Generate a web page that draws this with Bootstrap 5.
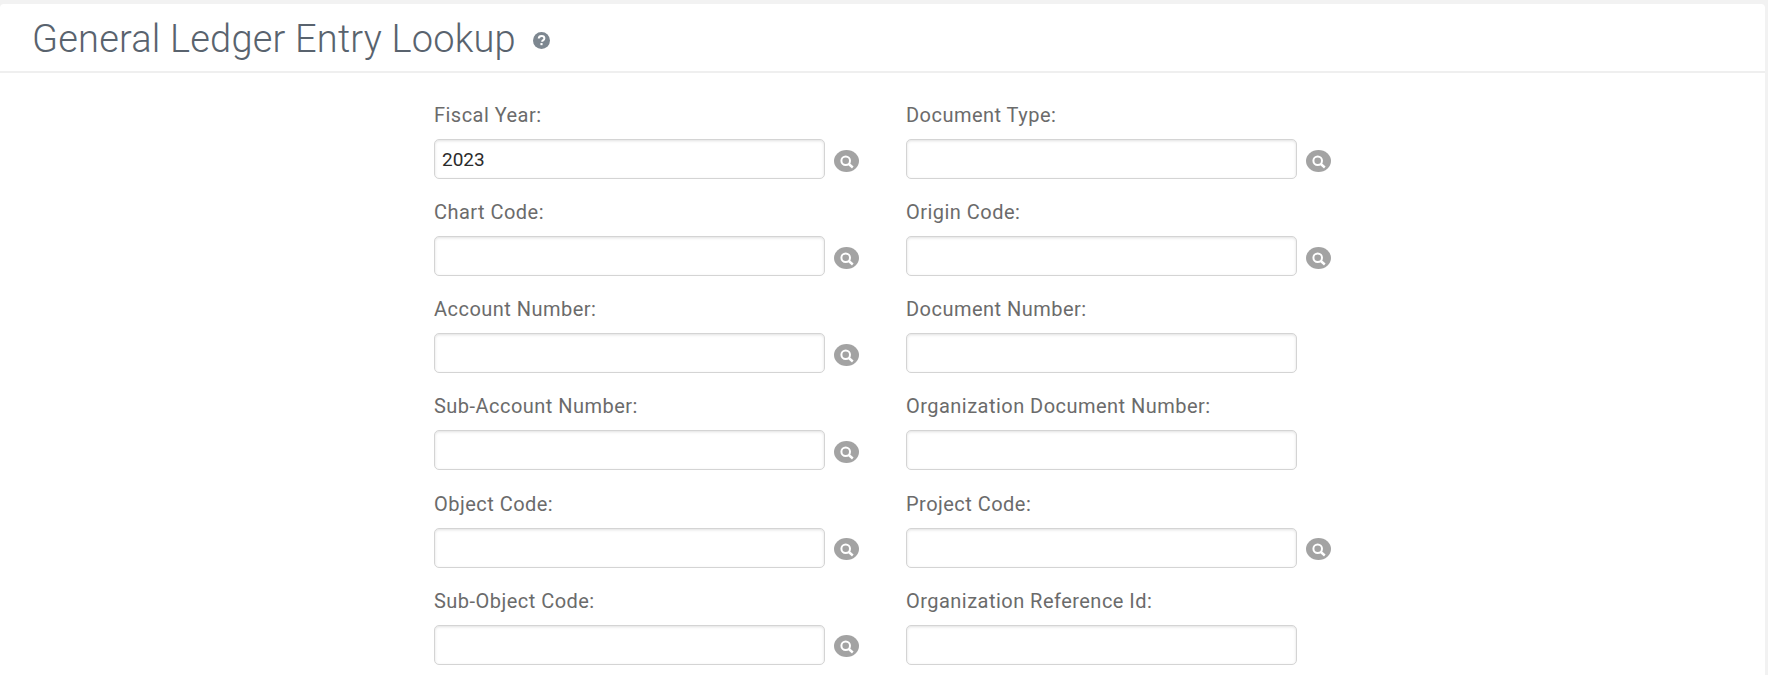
<!DOCTYPE html>
<html lang="en">
<head>
<meta charset="utf-8">
<title>General Ledger Entry Lookup</title>
<link href="https://cdn.jsdelivr.net/npm/bootstrap@5.3.0/dist/css/bootstrap.min.css" rel="stylesheet">
<style>
html, body { height: 100%; overflow: hidden; }
body { background: #f2f2f2; font-family: Roboto, "Liberation Sans", sans-serif; padding: 4px 3px 0 0; }
.page-panel { background: #fff; border-radius: 4px 4px 0 0; height: 100%; }
.page-head { height: 69px; border-bottom: 2px solid #efefef; padding-left: 32px; }
.page-title { font-family: Roboto, "Liberation Sans", sans-serif; font-weight: 300; font-size: 38px; line-height: 60px; color: #59636e; margin: 2px 0 0; letter-spacing: .2px; }
.help-icon { width: 17px; height: 17px; margin-left: 17px; margin-top: 5px; }
.lookup-form { width: 944px; margin-left: 434px; padding-top: 30px; }
.field-cell { height: 97.15px; }
.field-label { font-size: 20px; line-height: 24px; color: #6b6b6b; letter-spacing: .47px; margin: 0 0 12px; display: block; }
.field-input { width: 391px; height: 40px; border: 1px solid #d4d4d4; border-radius: 5px; box-shadow: inset 0 1px 3px rgba(0,0,0,.12); font-size: 19px; color: #2b2b2b; padding: 0 7px; font-family: Roboto, "Liberation Sans", sans-serif; }
.field-input:focus { outline: 0; }
.lookup-icon { width: 25px; height: 22px; margin-left: 9px; margin-top: 3px; }
</style>
</head>
<body>
<div class="page-panel">
  <header class="page-head d-flex align-items-center">
    <h1 class="page-title">General Ledger Entry Lookup</h1>
    <svg class="help-icon" viewBox="0 0 16 16" aria-hidden="true"><circle cx="8" cy="8" r="8" fill="#7d8790"/><path d="M5.4 6.1C5.5 4.6 6.6 3.7 8.1 3.7c1.5 0 2.6.9 2.6 2.2 0 1-.5 1.5-1.3 2-.6.4-.8.7-.8 1.3" fill="none" stroke="#fff" stroke-width="1.9"/><rect x="7" y="10.4" width="2" height="2" fill="#fff"/></svg>
  </header>
  <form class="lookup-form">
    <div class="row row-cols-2 g-0">
      <div class="col field-cell"><label class="field-label">Fiscal Year:</label><div class="d-flex align-items-center"><input class="field-input" value="2023"><svg class="lookup-icon" viewBox="0 0 25 22" aria-hidden="true"><ellipse cx="12.5" cy="11" rx="12.5" ry="11" fill="#a3a3a3"/><circle cx="11.7" cy="10.7" r="4.3" fill="none" stroke="#fff" stroke-width="2"/><path d="M14.8 14l4 3.5" stroke="#fff" stroke-width="2.4"/></svg></div></div>
      <div class="col field-cell"><label class="field-label">Document Type:</label><div class="d-flex align-items-center"><input class="field-input"><svg class="lookup-icon" viewBox="0 0 25 22" aria-hidden="true"><ellipse cx="12.5" cy="11" rx="12.5" ry="11" fill="#a3a3a3"/><circle cx="11.7" cy="10.7" r="4.3" fill="none" stroke="#fff" stroke-width="2"/><path d="M14.8 14l4 3.5" stroke="#fff" stroke-width="2.4"/></svg></div></div>
      <div class="col field-cell"><label class="field-label">Chart Code:</label><div class="d-flex align-items-center"><input class="field-input"><svg class="lookup-icon" viewBox="0 0 25 22" aria-hidden="true"><ellipse cx="12.5" cy="11" rx="12.5" ry="11" fill="#a3a3a3"/><circle cx="11.7" cy="10.7" r="4.3" fill="none" stroke="#fff" stroke-width="2"/><path d="M14.8 14l4 3.5" stroke="#fff" stroke-width="2.4"/></svg></div></div>
      <div class="col field-cell"><label class="field-label">Origin Code:</label><div class="d-flex align-items-center"><input class="field-input"><svg class="lookup-icon" viewBox="0 0 25 22" aria-hidden="true"><ellipse cx="12.5" cy="11" rx="12.5" ry="11" fill="#a3a3a3"/><circle cx="11.7" cy="10.7" r="4.3" fill="none" stroke="#fff" stroke-width="2"/><path d="M14.8 14l4 3.5" stroke="#fff" stroke-width="2.4"/></svg></div></div>
      <div class="col field-cell"><label class="field-label">Account Number:</label><div class="d-flex align-items-center"><input class="field-input"><svg class="lookup-icon" viewBox="0 0 25 22" aria-hidden="true"><ellipse cx="12.5" cy="11" rx="12.5" ry="11" fill="#a3a3a3"/><circle cx="11.7" cy="10.7" r="4.3" fill="none" stroke="#fff" stroke-width="2"/><path d="M14.8 14l4 3.5" stroke="#fff" stroke-width="2.4"/></svg></div></div>
      <div class="col field-cell"><label class="field-label">Document Number:</label><div class="d-flex align-items-center"><input class="field-input"></div></div>
      <div class="col field-cell"><label class="field-label">Sub-Account Number:</label><div class="d-flex align-items-center"><input class="field-input"><svg class="lookup-icon" viewBox="0 0 25 22" aria-hidden="true"><ellipse cx="12.5" cy="11" rx="12.5" ry="11" fill="#a3a3a3"/><circle cx="11.7" cy="10.7" r="4.3" fill="none" stroke="#fff" stroke-width="2"/><path d="M14.8 14l4 3.5" stroke="#fff" stroke-width="2.4"/></svg></div></div>
      <div class="col field-cell"><label class="field-label">Organization Document Number:</label><div class="d-flex align-items-center"><input class="field-input"></div></div>
      <div class="col field-cell"><label class="field-label">Object Code:</label><div class="d-flex align-items-center"><input class="field-input"><svg class="lookup-icon" viewBox="0 0 25 22" aria-hidden="true"><ellipse cx="12.5" cy="11" rx="12.5" ry="11" fill="#a3a3a3"/><circle cx="11.7" cy="10.7" r="4.3" fill="none" stroke="#fff" stroke-width="2"/><path d="M14.8 14l4 3.5" stroke="#fff" stroke-width="2.4"/></svg></div></div>
      <div class="col field-cell"><label class="field-label">Project Code:</label><div class="d-flex align-items-center"><input class="field-input"><svg class="lookup-icon" viewBox="0 0 25 22" aria-hidden="true"><ellipse cx="12.5" cy="11" rx="12.5" ry="11" fill="#a3a3a3"/><circle cx="11.7" cy="10.7" r="4.3" fill="none" stroke="#fff" stroke-width="2"/><path d="M14.8 14l4 3.5" stroke="#fff" stroke-width="2.4"/></svg></div></div>
      <div class="col field-cell"><label class="field-label">Sub-Object Code:</label><div class="d-flex align-items-center"><input class="field-input"><svg class="lookup-icon" viewBox="0 0 25 22" aria-hidden="true"><ellipse cx="12.5" cy="11" rx="12.5" ry="11" fill="#a3a3a3"/><circle cx="11.7" cy="10.7" r="4.3" fill="none" stroke="#fff" stroke-width="2"/><path d="M14.8 14l4 3.5" stroke="#fff" stroke-width="2.4"/></svg></div></div>
      <div class="col field-cell"><label class="field-label">Organization Reference Id:</label><div class="d-flex align-items-center"><input class="field-input"></div></div>
    </div>
  </form>
</div>
<script src="https://cdn.jsdelivr.net/npm/bootstrap@5.3.0/dist/js/bootstrap.bundle.min.js"></script>
</body>
</html>
